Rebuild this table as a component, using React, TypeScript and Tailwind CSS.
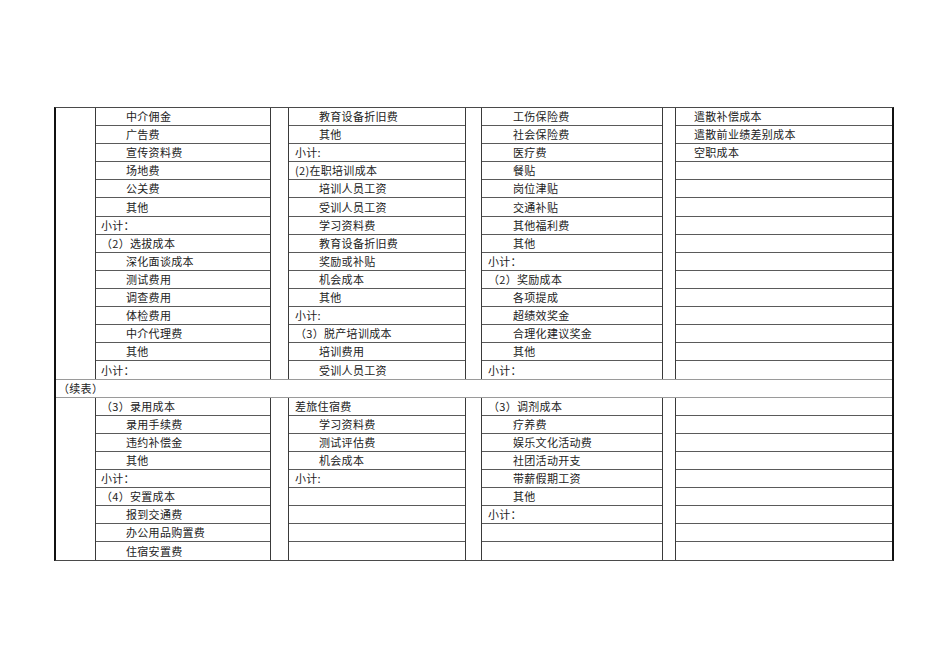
import React from "react";

type Cell = string;

const FONT = { fontFamily: '"Noto Sans CJK SC", "Noto Sans", sans-serif' };

function Col({
  rows,
  width,
  base,
  indent,
  last = false,
}: {
  rows: Cell[];
  width: string;
  base: string;
  indent: string;
  last?: boolean;
}) {
  return (
    <div
      className={
        "flex flex-col border-l border-[#3a3a3a] divide-y divide-[#5a5a5a] " +
        width +
        (last ? "" : " border-r")
      }
    >
      {rows.map((r, i) => {
        const ind = r.startsWith("i:");
        const text = ind ? r.slice(2) : r;
        return (
          <div
            key={i}
            className={
              "h-[18.1px] flex items-center whitespace-nowrap text-[11px] leading-none tracking-[0.3px] text-[#222] " +
              (ind ? indent : base)
            }
          >
            {text}
          </div>
        );
      })}
    </div>
  );
}

function Section({
  c2,
  c3,
  c4,
  c5,
}: {
  c2: Cell[];
  c3: Cell[];
  c4: Cell[];
  c5: Cell[];
}) {
  return (
    <div className="flex">
      <div className="w-[39px] shrink-0" />
      <Col rows={c2} width="w-[176px]" base="pl-[5px]" indent="pl-[30px]" />
      <div className="w-[17px] shrink-0" />
      <Col rows={c3} width="w-[178px]" base="pl-[6px]" indent="pl-[30px]" />
      <div className="w-[15px] shrink-0" />
      <Col rows={c4} width="w-[182px]" base="pl-[6px]" indent="pl-[31px]" />
      <div className="w-[12px] shrink-0" />
      <Col rows={c5} width="w-[217px]" base="pl-[18px]" indent="pl-[18px]" last />
    </div>
  );
}

const s1c2 = [
  "i:中介佣金",
  "i:广告费",
  "i:宣传资料费",
  "i:场地费",
  "i:公关费",
  "i:其他",
  "小计：",
  "（2）选拔成本",
  "i:深化面谈成本",
  "i:测试费用",
  "i:调查费用",
  "i:体检费用",
  "i:中介代理费",
  "i:其他",
  "小计：",
];
const s1c3 = [
  "i:教育设备折旧费",
  "i:其他",
  "小计:",
  "(2)在职培训成本",
  "i:培训人员工资",
  "i:受训人员工资",
  "i:学习资料费",
  "i:教育设备折旧费",
  "i:奖励或补贴",
  "i:机会成本",
  "i:其他",
  "小计:",
  "（3）脱产培训成本",
  "i:培训费用",
  "i:受训人员工资",
];
const s1c4 = [
  "i:工伤保险费",
  "i:社会保险费",
  "i:医疗费",
  "i:餐贴",
  "i:岗位津贴",
  "i:交通补贴",
  "i:其他福利费",
  "i:其他",
  "小计：",
  "（2）奖励成本",
  "i:各项提成",
  "i:超绩效奖金",
  "i:合理化建议奖金",
  "i:其他",
  "小计：",
];
const s1c5 = [
  "遣散补偿成本",
  "遣散前业绩差别成本",
  "空职成本",
  "", "", "", "", "", "", "", "", "", "", "", "",
];

const s2c2 = [
  "（3）录用成本",
  "i:录用手续费",
  "i:违约补偿金",
  "i:其他",
  "小计：",
  "（4）安置成本",
  "i:报到交通费",
  "i:办公用品购置费",
  "i:住宿安置费",
];
const s2c3 = [
  "差旅住宿费",
  "i:学习资料费",
  "i:测试评估费",
  "i:机会成本",
  "小计:",
  "",
  "",
  "",
  "",
];
const s2c4 = [
  "（3）调剂成本",
  "i:疗养费",
  "i:娱乐文化活动费",
  "i:社团活动开支",
  "i:带薪假期工资",
  "i:其他",
  "小计：",
  "",
  "",
];
const s2c5 = ["", "", "", "", "", "", "", "", ""];

export default function App() {
  return (
    <div className="w-[950px] h-[672px] bg-white pt-[107px] pl-[54px]" style={FONT}>
      <div className="w-[840px] border-l-2 border-r-2 border-t border-b border-l-[#111] border-r-[#111] border-t-[#4a4a4a] border-b-[#4a4a4a]">
        <Section c2={s1c2} c3={s1c3} c4={s1c4} c5={s1c5} />
        <div className="h-[18.1px] border-t border-b border-[#9a9a9a] flex items-center pl-[2px] text-[11px] leading-none tracking-[0.3px] text-[#222]">
          （续表）
        </div>
        <Section c2={s2c2} c3={s2c3} c4={s2c4} c5={s2c5} />
      </div>
    </div>
  );
}
